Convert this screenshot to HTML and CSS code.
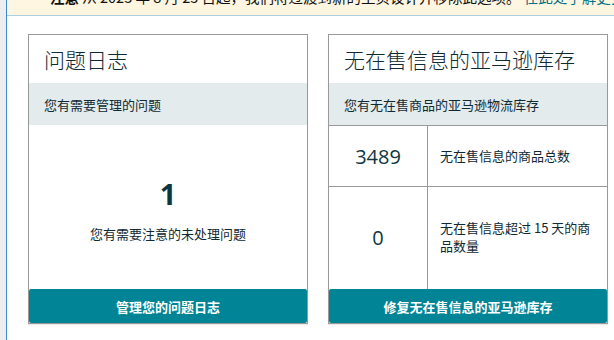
FILE: index.html
```html
<!DOCTYPE html>
<html lang="zh">
<head>
<meta charset="utf-8">
<link rel="stylesheet" href="styles.css">
</head>
<body>
<div class="rail"></div>
<div class="main">
  <div class="banner"><b>注意</b> 从 2023 年 8 月 25 日起，我们将过渡到新的主页设计并移除此选项。 <a class="link">在此处了解更多信息</a></div>
  <div class="cards">
    <section class="card">
      <h2 class="title">问题日志</h2>
      <div class="sub">您有需要管理的问题</div>
      <div class="body">
        <div class="big">1</div>
        <div class="desc">您有需要注意的未处理问题</div>
      </div>
      <div class="btn">管理您的问题日志</div>
    </section>
    <section class="card">
      <h2 class="title">无在售信息的亚马逊库存</h2>
      <div class="sub">您有无在售商品的亚马逊物流库存</div>
      <div class="table">
        <div class="row r1">
          <div class="num">3489</div>
          <div class="lbl">无在售信息的商品总数</div>
        </div>
        <div class="row r2">
          <div class="num">0</div>
          <div class="lbl">无在售信息超过 15 天的商品数量</div>
        </div>
      </div>
      <div class="btn">修复无在售信息的亚马逊库存</div>
    </section>
  </div>
</div>
</body>
</html>
```
FILE: styles.css
```css
html, body { margin: 0; padding: 0; }
body {
  display: flex;
  min-height: 340px;
  background: #fff;
  font-family: "Noto Sans CJK SC", "Noto Sans", sans-serif;
  color: #0f1111;
  overflow: hidden;
}
.rail { width: 6px; background: #eeeeee; flex: none; }
.main { flex: 1; border-left: 1px solid #3a8ad6; min-width: 0; }
.banner {
  margin-top: -21px;
  padding: 8px 0 8px 43px;
  line-height: 20px;
  font-size: 14.5px;
  white-space: nowrap;
  background: #fef6e0;
  border-bottom: 1px solid #a9d2dc;
  color: #0f1111;
  overflow: hidden;
}
.banner b { font-weight: 700; }
.link { color: #007185; }
.cards {
  display: flex;
  gap: 20px;
  padding: 18px 0 0 21px;
}
.card {
  width: 280px;
  height: 290px;
  box-sizing: border-box;
  border: 1px solid #999;
  display: flex;
  flex-direction: column;
  box-shadow: 0 1px 1px rgba(0,0,0,0.08);
}
.title {
  margin: 0;
  height: 48px;
  box-sizing: border-box;
  padding: 10px 15px 0;
  font-size: 21px;
  line-height: 28px;
  font-weight: 300;
  color: #0f2a33;
  white-space: nowrap;
}
.sub {
  height: 42px;
  box-sizing: border-box;
  padding: 0 15px;
  display: flex;
  align-items: center;
  background: #e3ebec;
  font-size: 13px;
  color: #0f2a33;
}
.body {
  flex: 1;
  display: flex;
  flex-direction: column;
  align-items: center;
  justify-content: center;
  padding-top: 4px;
}
.big {
  font-family: "Open Sans", sans-serif;
  font-size: 29px;
  font-weight: 700;
  line-height: 36px;
  color: #0e3640;
}
.desc { font-size: 13px; margin-top: 12px; color: #0f2a33; }
.table { flex: 1; display: flex; flex-direction: column; border-top: 1px solid #999; }
.row { display: flex; }
.r1 { height: 60px; border-bottom: 1px solid #999; }
.r2 { flex: 1; }
.num {
  width: 98px;
  flex: none;
  border-right: 1px solid #999;
  display: flex;
  align-items: center;
  justify-content: center;
  font-family: "Open Sans", sans-serif;
  font-size: 20px;
  color: #0e3640;
}
.r2 .num { padding-bottom: 2px; }
.lbl {
  flex: 1;
  padding: 0 12px 0 12px;
  display: flex;
  align-items: center;
  font-size: 13px;
  line-height: 18px;
  color: #0f2a33;
}
.r2 .lbl { padding-bottom: 2px; }
.btn {
  height: 34px;
  flex: none;
  display: flex;
  align-items: center;
  justify-content: center;
  background: #018596;
  color: #fff;
  font-size: 13px;
  font-weight: 700;
  border-radius: 2px;
}
```
